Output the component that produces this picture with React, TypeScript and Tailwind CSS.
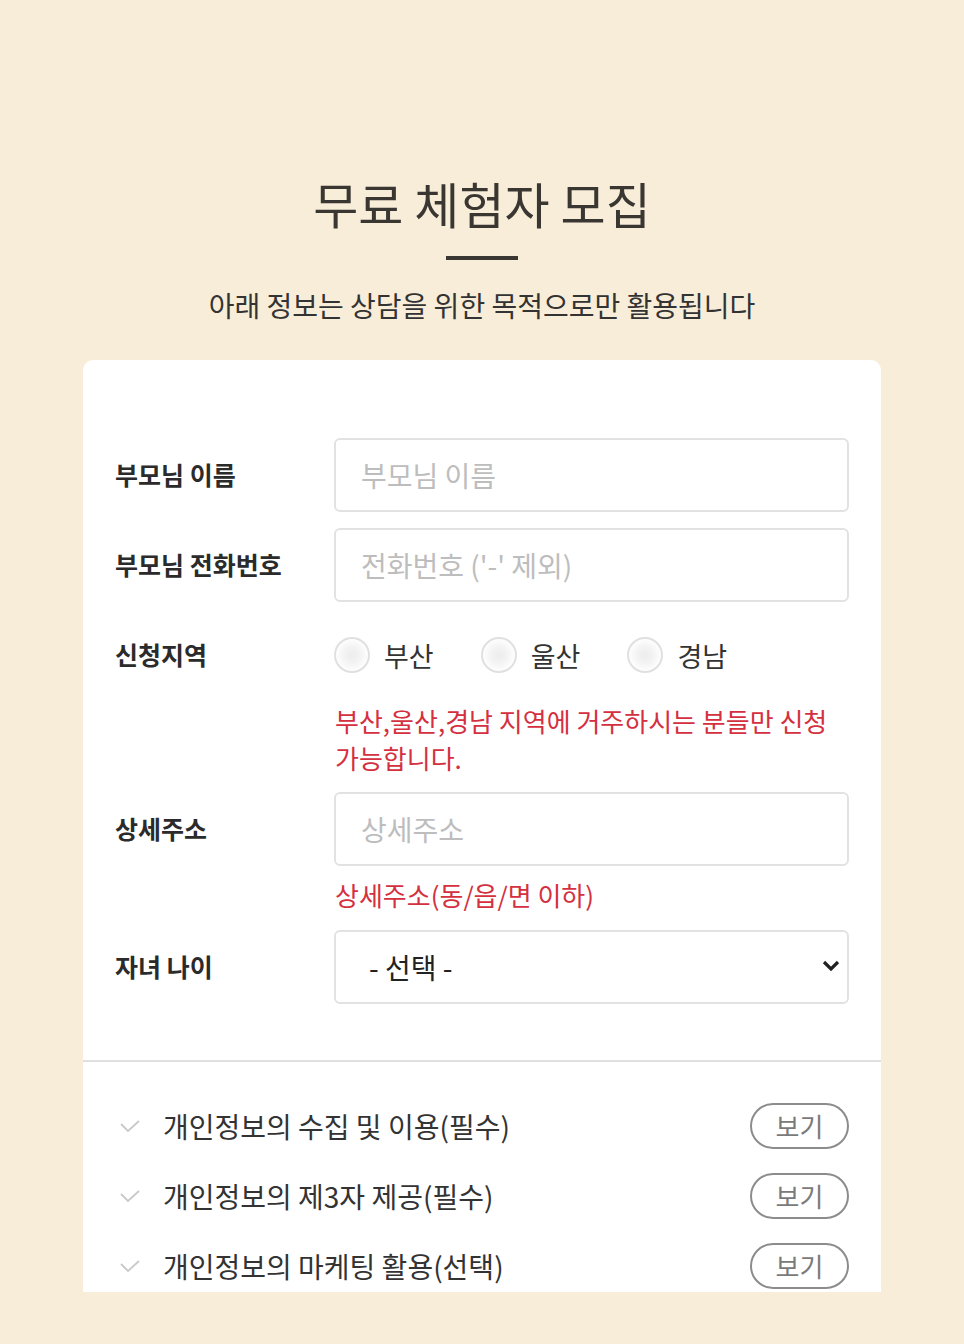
import React from "react";

function Check() {
  return (
    <svg width="22" height="14" viewBox="0 0 22 14" fill="none">
      <polyline points="2,5 9,12 20,2" stroke="#c9c9c9" strokeWidth="1.8" fill="none" />
    </svg>
  );
}

function Radio({ label }: { label: string }) {
  return (
    <label className="flex items-center gap-[14px]">
      <span className="block w-[36px] h-[36px] rounded-full border-2 border-[#e0e0e0] bg-[radial-gradient(circle,#ececec_0%,#f3f3f3_35%,#ffffff_75%)]" />
      <span className="text-[27px] leading-none text-[#333]">{label}</span>
    </label>
  );
}

function Row({ label, children }: { label: string; children: React.ReactNode }) {
  return (
    <div className="flex items-center">
      <div className="w-[219px] shrink-0 text-[25px] font-bold text-[#2b2b2b]">{label}</div>
      <div className="flex-1">{children}</div>
    </div>
  );
}

function TextInput({ placeholder }: { placeholder: string }) {
  return (
    <input
      placeholder={placeholder}
      className="block w-full h-[74px] rounded-[6px] border-2 border-[#e2e2e2] bg-white pl-[25px] text-[28px] text-[#333] placeholder:text-[#bdbdbd] outline-none"
    />
  );
}

function Agree({ text }: { text: string }) {
  return (
    <div className="flex items-center h-[70px]">
      <div className="w-[48px] pl-[4px] flex items-center">
        <Check />
      </div>
      <div className="flex-1 text-[28px] text-[#333]">{text}</div>
      <button className="w-[99px] h-[46px] rounded-full border-2 border-[#8c8c8c] text-[26px] text-[#7a7a7a] leading-none">
        보기
      </button>
    </div>
  );
}

export default function App() {
  return (
    <div className="min-h-[1344px] bg-[#f8edd9] font-['Noto_Sans_CJK_KR','Noto_Sans',sans-serif] pt-[178px] pb-[52px]">
      <h1 className="text-center text-[49px] leading-[49px] text-[#3a3632] font-normal">무료 체험자 모집</h1>
      <div className="mx-auto mt-[29px] w-[72px] h-[4px] bg-[#3a3632]" />
      <p className="mt-[27px] text-center text-[28px] leading-[36px] text-[#333]">
        아래 정보는 상담을 위한 목적으로만 활용됩니다
      </p>
      <div className="mx-auto mt-[37px] w-[798px] h-[932px] overflow-hidden rounded-t-[10px] bg-white">
        <div className="px-[32px] pt-[78px]">
          <Row label="부모님 이름">
            <TextInput placeholder="부모님 이름" />
          </Row>
          <div className="mt-[16px]">
            <Row label="부모님 전화번호">
              <TextInput placeholder="전화번호 ('-' 제외)" />
            </Row>
          </div>
          <div className="mt-[16px]">
            <Row label="신청지역">
              <div className="h-[74px] flex items-center gap-[47px]">
                <Radio label="부산" />
                <Radio label="울산" />
                <Radio label="경남" />
              </div>
            </Row>
          </div>
          <div className="mt-[10px] pl-[220px] text-[26px] leading-[37px] text-[#d4303f]">
            부산,울산,경남 지역에 거주하시는 분들만 신청 가능합니다.
          </div>
          <div className="mt-[16px]">
            <Row label="상세주소">
              <TextInput placeholder="상세주소" />
            </Row>
          </div>
          <div className="mt-[10px] pl-[220px] text-[26px] leading-[37px] text-[#d4303f]">
            상세주소(동/읍/면 이하)
          </div>
          <div className="mt-[17px]">
            <Row label="자녀 나이">
              <div className="relative">
                <select className="block w-full h-[74px] appearance-none rounded-[6px] border-2 border-[#e2e2e2] bg-white pl-[33px] text-[28px] text-[#222] outline-none">
                  <option>- 선택 -</option>
                </select>
                <svg
                  className="pointer-events-none absolute right-[9px] top-[29px]"
                  width="18"
                  height="14"
                  viewBox="0 0 18 14"
                  fill="none"
                >
                  <polyline points="2,3 9,10 16,3" stroke="#222" strokeWidth="3.2" fill="none" />
                </svg>
              </div>
            </Row>
          </div>
        </div>
        <div className="mt-[56px] h-[2px] bg-[#e0e0e0]" />
        <div className="px-[32px] pt-[29px]">
          <Agree text="개인정보의 수집 및 이용(필수)" />
          <Agree text="개인정보의 제3자 제공(필수)" />
          <Agree text="개인정보의 마케팅 활용(선택)" />
        </div>
      </div>
    </div>
  );
}
